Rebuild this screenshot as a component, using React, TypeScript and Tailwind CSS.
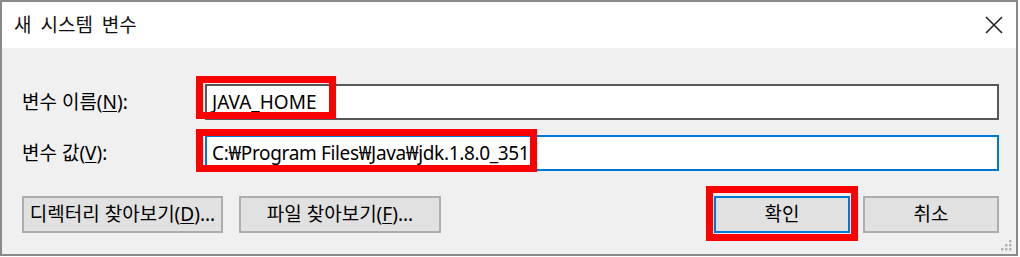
import React from "react";

const FONT = { fontFamily: '"Noto Sans", "Noto Sans CJK KR", sans-serif' };

function Grip() {
  const dots = [
    [8, 0],
    [4, 4],
    [8, 4],
    [0, 8],
    [4, 8],
    [8, 8],
  ];
  return (
    <svg width="11" height="11" viewBox="0 0 11 11" className="absolute right-[4px] bottom-[3px]">
      {dots.map(([x, y], i) => (
        <rect key={i} x={x} y={y} width="2.5" height="2.5" fill="#b5b5b5" />
      ))}
    </svg>
  );
}

export default function App() {
  return (
    <div className="relative w-[1020px] h-[257px] bg-white overflow-hidden text-black" style={FONT}>
      <div className="w-[1018px] h-[256px] flex flex-col border-2 border-[#8a8a8a]">
        {/* Title bar */}
        <div className="h-[46px] bg-white flex items-center justify-between pl-[12px] pr-[12px]">
          <span className="text-[19px] leading-none text-[#111] [word-spacing:4px]">새 시스템 변수</span>
          <svg width="18" height="18" viewBox="0 0 18 18" className="mr-[1px] mb-[1px]">
            <path d="M1 1 L17 17 M17 1 L1 17" stroke="#222" strokeWidth="1.6" fill="none" />
          </svg>
        </div>
        {/* Body */}
        <div className="relative flex-1 bg-[#f0f0f0] pl-[20px] pr-[17px] pt-[36px]">
          <div className="flex flex-col gap-[15px]">
            <div className="flex items-center h-[36px]">
              <div className="w-[183px] text-[19px] leading-none">
                변수 이름(<u className="underline-offset-2">N</u>):
              </div>
              <div className="flex-1 h-full bg-white border-2 border-[#575757] flex items-center pl-[5px] text-[19px] leading-none">
                JAVA_HOME
              </div>
            </div>
            <div className="flex items-center h-[36px]">
              <div className="w-[183px] text-[19px] leading-none">
                변수 값(<u className="underline-offset-2">V</u>):
              </div>
              <div className="flex-1 h-full bg-white border-2 border-[#0078d7] flex items-center pl-[5px] text-[19px] leading-none tracking-[-0.35px]">
                C:₩Program Files₩Java₩jdk.1.8.0_351
              </div>
            </div>
          </div>
          <div className="mt-[25px] flex h-[37px] text-[19px] leading-none">
            <button className="w-[201px] h-full bg-[#e1e1e1] border-2 border-[#adadad] flex items-center justify-center">
              디렉터리 찾아보기(<u className="underline-offset-2">D</u>)...
            </button>
            <button className="ml-[16px] w-[202px] h-full bg-[#e1e1e1] border-2 border-[#adadad] flex items-center justify-center">
              파일 찾아보기(<u className="underline-offset-2">F</u>)...
            </button>
            <button className="ml-auto w-[136px] h-full bg-[#e1e1e1] border-2 border-[#0078d7] flex items-center justify-center">
              확인
            </button>
            <button className="ml-[13px] w-[136px] h-full bg-[#e1e1e1] border-2 border-[#adadad] flex items-center justify-center">
              취소
            </button>
          </div>
          <Grip />
        </div>
      </div>

      {/* Red annotation boxes */}
      <div className="absolute left-[196px] top-[76px] w-[140px] h-[43px] border-[7px] border-[#ff0000]" />
      <div className="absolute left-[196px] top-[129px] w-[341px] h-[43px] border-[7px] border-[#ff0000]" />
      <div className="absolute left-[706px] top-[186px] w-[152px] h-[55px] border-[7px] border-[#ff0000]" />
    </div>
  );
}
